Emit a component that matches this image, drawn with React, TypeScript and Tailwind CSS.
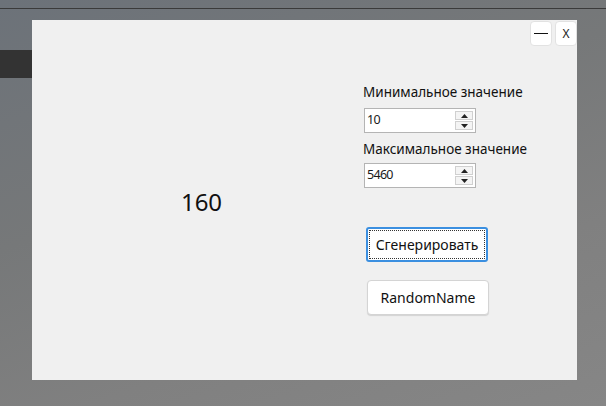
import React from 'react';

const font = { fontFamily: '"Noto Sans", "Open Sans", sans-serif' };

const SpinBox: React.FC<{ value: string }> = ({ value }) => (
  <div className="flex w-[112px] h-[25px] border border-[#b4b4b4] bg-white">
    <div className="flex-1 flex items-center pl-[2px] text-[12.5px] text-[#1a1a1a] tracking-[-0.7px]">{value}</div>
    <div className="w-[20px] flex flex-col justify-center gap-[1px] pr-[2px] py-[2px]">
      <div className="flex-1 flex items-center justify-center border border-[#d0d0d0] bg-[#f4f4f4]">
        <svg width="7" height="4" viewBox="0 0 7 4"><path d="M0 4 L3.5 0 L7 4 Z" fill="#222" /></svg>
      </div>
      <div className="flex-1 flex items-center justify-center border border-[#d0d0d0] bg-[#f4f4f4]">
        <svg width="7" height="4" viewBox="0 0 7 4"><path d="M0 0 L3.5 4 L7 0 Z" fill="#222" /></svg>
      </div>
    </div>
  </div>
);

const App: React.FC = () => {
  return (
    <div
      className="relative w-[606px] h-[406px] overflow-hidden bg-[linear-gradient(160deg,#6c7279_0%,#767879_40%,#808080_70%,#868686_100%)]"
      style={font}
    >
      {/* desktop decorations */}
      <div className="absolute left-0 top-[8px] w-full h-[1px] bg-[#3a3a3a]" />
      <div className="absolute left-0 top-[50px] w-[32px] h-[28px] bg-[#333333]" />

      {/* window */}
      <div className="absolute left-[32px] top-[20px] w-[545px] h-[360px] bg-[#f0f0f0] flex flex-col">
        <div className="flex justify-end gap-[3px] pt-[1px] h-[63px]">
          <div className="w-[22px] h-[25px] bg-white rounded-[4px] border border-[#e2e2e2] flex items-center justify-center">
            <div className="w-[14px] h-[1.5px] bg-[#111]" />
          </div>
          <div className="w-[22px] h-[25px] bg-white rounded-[4px] border border-[#e2e2e2] flex items-center justify-center text-[12px] text-[#222]">
            X
          </div>
        </div>
        <div className="flex flex-1">
          <div className="w-[331px] flex justify-center pt-[103px] pl-[8px]">
            <div className="text-[24px] text-[#111] leading-[32px] h-[32px]">160</div>
          </div>
          <div className="flex flex-col">
            <div className="text-[13.5px] text-[#111] leading-[18px] h-[25px]">Минимальное значение</div>
            <div className="pl-[1px]"><SpinBox value="10" /></div>
            <div className="text-[13.5px] text-[#111] leading-[18px] h-[23px] mt-[7px]">Максимальное значение</div>
            <div className="pl-[1px]"><SpinBox value="5460" /></div>
            <div className="pl-[3px] mt-[39px]">
              <div className="w-[122px] h-[35px] rounded-[3px] border-2 border-[#3b8fe0] bg-white p-[1px]">
                <div className="w-full h-full border border-dotted border-[#333] flex items-center justify-center text-[14px] text-[#111]">
                  Сгенерировать
                </div>
              </div>
            </div>
            <div className="pl-[4px] mt-[18px]">
              <div className="w-[122px] h-[35px] rounded-[4px] border border-[#d4d4d4] bg-white shadow-[0_1px_1px_rgba(0,0,0,0.12)] flex items-center justify-center text-[14px] text-[#111]">
                RandomName
              </div>
            </div>
          </div>
        </div>
      </div>
    </div>
  );
};

export default App;
